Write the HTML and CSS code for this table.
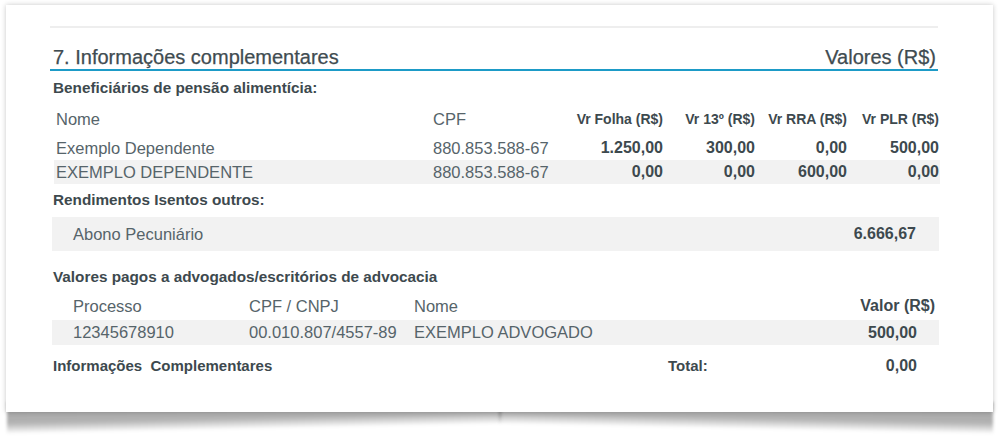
FILE: index.html
```html
<!DOCTYPE html>
<html lang="pt-BR">
<head>
<meta charset="utf-8">
<title>Informações complementares</title>
<link rel="stylesheet" href="styles.css">
</head>
<body>
<div class="paper">
<div class="sheet">
  <div class="topline"></div>
  <div class="section-title">
    <h2 class="title-text">7. Informações complementares</h2>
    <span class="title-right">Valores (R$)</span>
  </div>

  <div class="label label-first">Beneficiários de pensão alimentícia:</div>
  <div class="benef">
    <div class="brow bhead">
      <div class="c-name">Nome</div>
      <div class="c-cpf">CPF</div>
      <div class="num small">Vr Folha (R$)</div>
      <div class="num small">Vr 13º (R$)</div>
      <div class="num small">Vr RRA (R$)</div>
      <div class="num small">Vr PLR (R$)</div>
    </div>
    <div class="brow">
      <div class="c-name">Exemplo Dependente</div>
      <div class="c-cpf">880.853.588-67</div>
      <div class="num">1.250,00</div>
      <div class="num">300,00</div>
      <div class="num">0,00</div>
      <div class="num">500,00</div>
    </div>
    <div class="brow shaded">
      <div class="c-name">EXEMPLO DEPENDENTE</div>
      <div class="c-cpf">880.853.588-67</div>
      <div class="num">0,00</div>
      <div class="num">0,00</div>
      <div class="num">600,00</div>
      <div class="num">0,00</div>
    </div>
  </div>

  <div class="label label-second">Rendimentos Isentos outros:</div>
  <div class="isentos">
    <span>Abono Pecuniário</span>
    <span class="num">6.666,67</span>
  </div>

  <div class="label label-third">Valores pagos a advogados/escritórios de advocacia</div>
  <div class="adv">
    <div class="arow ahead">
      <div class="a-proc">Processo</div>
      <div>CPF / CNPJ</div>
      <div>Nome</div>
      <div class="num a-val-head">Valor (R$)</div>
    </div>
    <div class="arow shaded">
      <div class="a-proc">12345678910</div>
      <div>00.010.807/4557-89</div>
      <div>EXEMPLO ADVOGADO</div>
      <div class="num a-val">500,00</div>
    </div>
  </div>

  <div class="footer">
    <div class="foot-label">Informações&nbsp;&nbsp;Complementares</div>
    <div class="foot-total">
      <span>Total:</span>
      <span class="num">0,00</span>
    </div>
  </div>
</div>
</div>
</body>
</html>
```

FILE: styles.css
```css
html {
  background: #ffffff;
}

body {
  margin: 0;
  padding: 5px 0 29px 6px;
  font-family: "Liberation Sans", Arial, Helvetica, sans-serif;
  color: #56646a;
  font-size: 16.5px;
}

.paper {
  position: relative;
  width: 987px;
  height: 407px;
}

.paper::before,
.paper::after {
  content: "";
  position: absolute;
  z-index: 0;
  top: calc(100% - 20px);
  height: 32px;
  width: 50%;
  background: linear-gradient(to bottom,
    rgba(0, 0, 0, 0.36) 0,
    rgba(0, 0, 0, 0.30) 21px,
    rgba(0, 0, 0, 0) 32px);
  filter: blur(1.5px);
}

.paper::before {
  left: 1px;
  transform-origin: top right;
  transform: skewY(-1.15deg);
}

.paper::after {
  right: 1px;
  transform-origin: top left;
  transform: skewY(1.15deg);
}

.sheet {
  position: relative;
  z-index: 1;
  box-sizing: border-box;
  width: 987px;
  height: 407px;
  padding: 21px 53px 0 44px;
  background: #ffffff;
  box-shadow: 0 0 5px rgba(0, 0, 0, 0.22);
}

.topline {
  height: 2px;
  margin-right: 2px;
  background: #eeeeee;
}

.section-title {
  display: flex;
  justify-content: space-between;
  align-items: baseline;
  margin: 17px 2px 0 0;
  padding: 0 2px 0 3px;
  height: 24px;
  line-height: 24px;
  border-bottom: 2px solid #1d9bc7;
  color: #3f4c51;
  font-size: 20px;
  -webkit-text-stroke: 0.25px #3f4c51;
}

.title-text {
  margin: 0;
  font-size: 20px;
  font-weight: normal;
}

.label {
  padding-left: 3px;
  line-height: 20px;
  font-size: 15.3px;
  font-weight: bold;
  color: #3d494e;
}

.label-first { margin-top: 7px; }
.label-second { margin-top: 6px; }
.label-third { margin-top: 16px; }

.num {
  text-align: right;
  font-weight: bold;
  color: #3d494e;
  font-size: 16px;
}

.small {
  font-size: 14px;
}

.shaded {
  background: #f2f2f2;
}

/* beneficiários */
.benef {
  margin-left: 4px;
  width: 886px;
}

.brow {
  display: grid;
  grid-template-columns: 377px 140px repeat(4, 92px);
  height: 24px;
  line-height: 24px;
  white-space: nowrap;
}

.brow.bhead {
  height: 38px;
  padding-top: 4px;
  box-sizing: border-box;
  line-height: 34px;
}

.c-name {
  padding-left: 2px;
}

.c-cpf {
  padding-left: 2px;
}

/* isentos */
.isentos {
  display: flex;
  justify-content: space-between;
  align-items: center;
  margin: 7px 0 0 2px;
  width: 887px;
  height: 34px;
  padding: 0 23px 0 21px;
  box-sizing: border-box;
  background: #f2f2f2;
}

/* advogados */
.adv {
  margin-left: 2px;
  width: 887px;
}

.arow {
  display: grid;
  grid-template-columns: 197px 165px 1fr 150px;
  height: 25px;
  line-height: 25px;
  white-space: nowrap;
}

.arow.ahead {
  height: 33px;
  padding-top: 5px;
  box-sizing: border-box;
  line-height: 28px;
}

.a-proc {
  padding-left: 21px;
}

.a-val-head {
  padding-right: 4px;
}

.a-val {
  padding-right: 22px;
}

/* rodapé */
.footer {
  display: grid;
  grid-template-columns: 616px 1fr;
  margin: 11px 0 0 2px;
  width: 887px;
  line-height: 20px;
  font-weight: bold;
  color: #3d494e;
}

.foot-label {
  padding-left: 1px;
  font-size: 15px;
}

.foot-total {
  display: flex;
  justify-content: space-between;
  padding-right: 22px;
  font-size: 15px;
}
```
